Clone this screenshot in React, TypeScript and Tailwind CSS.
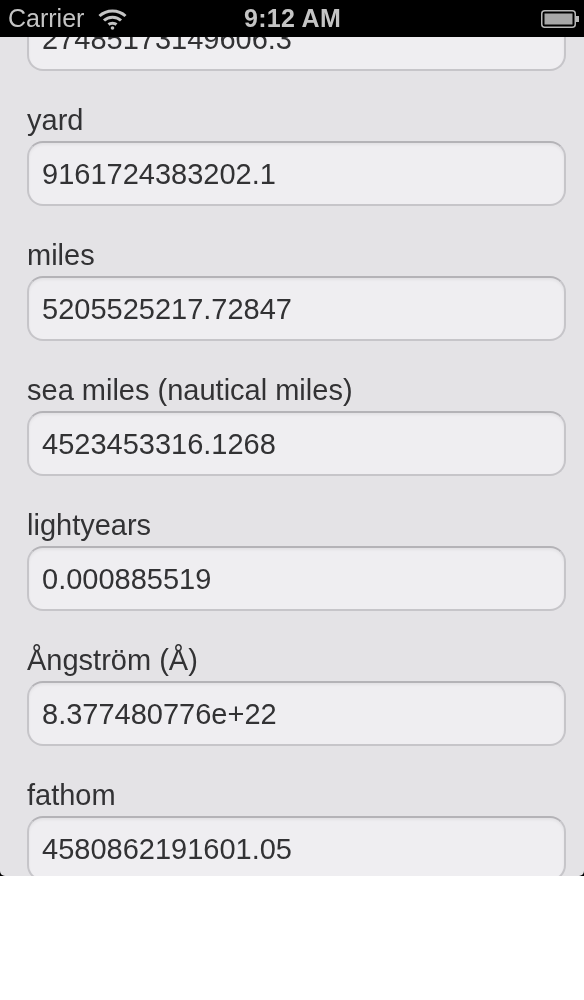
import React from "react";

const FIELDS = [
  { label: "yard", value: "9161724383202.1" },
  { label: "miles", value: "5205525217.72847" },
  { label: "sea miles (nautical miles)", value: "4523453316.1268" },
  { label: "lightyears", value: "0.000885519" },
  { label: "Ångström (Å)", value: "8.377480776e+22" },
  { label: "fathom", value: "4580862191601.05" },
];

const FieldBox = ({ value }: { value: string }) => (
  <div className="h-[65px] flex items-center pl-[13px] pt-[2px] rounded-[16px] border-2 border-[#c6c5c9] border-t-[#b4b3b7] bg-[#efeef1] shadow-[inset_0_2px_3px_rgba(0,0,0,0.05)] text-[29px] leading-none text-[#323234]">
    {value}
  </div>
);

const StatusBar = () => (
  <div className="h-[37px] shrink-0 bg-black grid grid-cols-3 items-center pl-[8px] pr-[5px] text-[#c4c4c4]">
    <div className="flex items-center gap-[14px] text-[25px] leading-none whitespace-nowrap">
      <span>Carrier</span>
      <svg width="29" height="22" viewBox="0 0 29 22" fill="none" stroke="#c4c4c4" strokeWidth="3" className="shrink-0">
        <path d="M1.5 8 C8.5 1.2 20.5 1.2 27.5 8" />
        <path d="M6 12.5 C10.5 8 18.5 8 23 12.5" />
        <path d="M10.5 16.5 C12.5 14.8 16.5 14.8 18.5 16.5" />
        <circle cx="14.5" cy="20" r="1.8" fill="#c4c4c4" stroke="none" />
      </svg>
    </div>
    <span className="justify-self-center -ml-[2px] font-bold text-[25px] tracking-[0.3px] leading-none whitespace-nowrap">9:12 AM</span>
    <svg width="38" height="18" viewBox="0 0 38 18" fill="none" className="justify-self-end">
      <rect x="0.75" y="0.75" width="33.5" height="16.5" rx="3" stroke="#b8b8b8" strokeWidth="1.5" />
      <rect x="3.5" y="3.5" width="28" height="11" fill="#a8a8a8" />
      <rect x="35" y="6" width="3" height="6" fill="#b8b8b8" />
    </svg>
  </div>
);

export default function App() {
  return (
    <div className="w-[584px] h-[1000px] bg-white flex flex-col font-['Liberation_Sans',Arial,sans-serif] blur-[0.4px]">
      <StatusBar />
      <div className="h-[839px] bg-black">
        <div className="h-full overflow-hidden rounded-b-[5px] bg-[#e4e3e6] pl-[27px] pr-[18px]">
          <div className="-mt-[31px]">
            <FieldBox value="27485173149606.3" />
          </div>
          {FIELDS.map((f) => (
            <div key={f.label} className="mt-[32px]">
              <div className="h-[34px] mb-[4px] flex items-center text-[29px] leading-none text-[#323234]">{f.label}</div>
              <FieldBox value={f.value} />
            </div>
          ))}
        </div>
      </div>
    </div>
  );
}
